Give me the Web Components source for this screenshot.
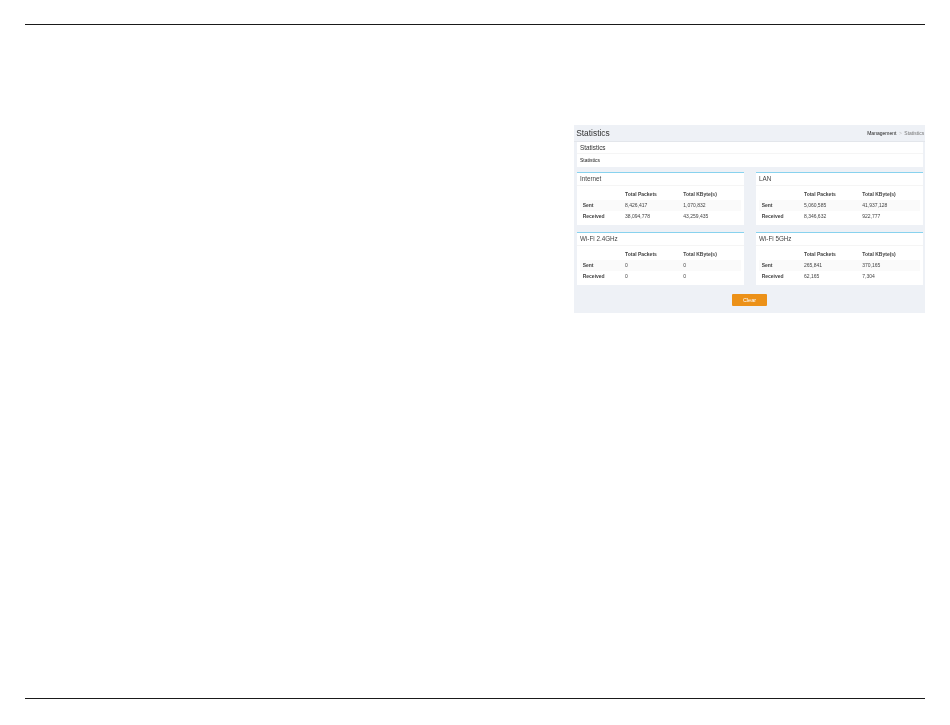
<!DOCTYPE html>
<html>
<head>
<meta charset="utf-8">
<title>Statistics</title>
<style>
  html, body { margin: 0; height: 100%; background: #fff; }
  body { font-family: "Liberation Sans", Arial, sans-serif; }
</style>
</head>
<body>
<manual-page>
  <stats-panel>
    <stats-card slot="cards" name="Internet" sent-packets="8,426,417" sent-kb="1,070,832" recv-packets="38,094,778" recv-kb="43,259,435"></stats-card>
    <stats-card slot="cards" name="LAN" sent-packets="5,060,585" sent-kb="41,937,128" recv-packets="8,346,632" recv-kb="922,777"></stats-card>
    <stats-card slot="cards" name="Wi-Fi 2.4GHz" sent-packets="0" sent-kb="0" recv-packets="0" recv-kb="0"></stats-card>
    <stats-card slot="cards" name="Wi-Fi 5GHz" sent-packets="265,841" sent-kb="370,165" recv-packets="62,165" recv-kb="7,304"></stats-card>
  </stats-panel>
</manual-page>

<script>
(function () {
  /* =========================
    PAGE FRAME
  ========================= */
  class ManualPage extends HTMLElement {
    constructor() {
      super();
      this.attachShadow({ mode: "open" });
      this.shadowRoot.innerHTML = `
        <style>
        :host{
            display:flex;
            flex-direction:column;
            box-sizing:border-box;
            height:725px;
            padding:24px 25px 26px;
        }
        .rule{
            height:1px;
            background:#1a1a1a;
            flex:none;
        }
        .body{
            flex:1;
            display:flex;
            justify-content:flex-end;
            align-items:flex-start;
            padding-top:100px;
        }
        </style>
        <div class="rule"></div>
        <div class="body"><slot></slot></div>
        <div class="rule"></div>
      `;
    }
  }

  /* =========================
    GREY PANEL
  ========================= */
  class StatsPanel extends HTMLElement {
    constructor() {
      super();
      this.attachShadow({ mode: "open" });
      this.shadowRoot.innerHTML = `
        <style>
        :host{
            display:block;
            box-sizing:border-box;
            width:351px;
            height:188px;
            background:#eef1f6;
            color:#333;
            filter:blur(.45px);
        }
        .head{
            display:flex;
            justify-content:space-between;
            align-items:center;
            box-sizing:border-box;
            height:16.7px;
            padding:0 .7px 0 2.2px;
            border-bottom:1px solid #e3e6eb;
        }
        h1{
            margin:0;
            font-size:8.4px;
            font-weight:normal;
        }
        .crumb{
            display:flex;
            gap:2.5px;
            font-size:5px;
            color:#222;
        }
        .crumb i{ font-style:normal; color:#bbb; }
        .crumb span{ color:#777; }
        .intro{
            margin:0 1.7px 0 2.7px;
            background:#fff;
            height:25px;
        }
        .intro h2{
            box-sizing:border-box;
            margin:0;
            height:12.3px;
            line-height:11px;
            padding-left:3.3px;
            font-size:6.4px;
            font-weight:normal;
            border-bottom:1px solid #f5f5f5;
        }
        .intro p{
            margin:0;
            padding-left:3.3px;
            line-height:12.7px;
            font-size:5px;
            color:#222;
        }
        .grid{
            display:grid;
            grid-template-columns:167.6px 167.6px;
            column-gap:11.4px;
            row-gap:6.4px;
            margin:5px 0 0 2.7px;
        }
        .foot{
            display:flex;
            justify-content:center;
            margin-top:8.7px;
        }
        button{
            width:35px;
            height:11.7px;
            padding:0;
            border:0;
            border-radius:1px;
            background:#ec9118;
            color:#fff;
            font:5.5px "Liberation Sans", Arial, sans-serif;
        }
        </style>
        <div class="head">
          <h1>Statistics</h1>
          <div class="crumb">Management <i>&gt;</i> <span>Statistics</span></div>
        </div>
        <div class="intro">
          <h2>Statistics</h2>
          <p>Statistics</p>
        </div>
        <div class="grid"><slot name="cards"></slot></div>
        <div class="foot"><button>Clear</button></div>
      `;
    }
  }

  /* =========================
    ONE COUNTER CARD
  ========================= */
  class StatsCard extends HTMLElement {
    constructor() {
      super();
      this.attachShadow({ mode: "open" });
    }

    connectedCallback() {
      this.render();
    }

    render() {
      const v = (n) => this.getAttribute(n) || "";
      this.shadowRoot.innerHTML = `
        <style>
        :host{
            display:block;
            height:53.6px;
            background:#fff;
        }
        .bar{
            height:1.6px;
            background:#88d2ee;
        }
        .title{
            box-sizing:border-box;
            height:13.2px;
            line-height:11.5px;
            padding-left:3.3px;
            font-size:6.3px;
            color:#444;
            border-bottom:1px solid #f5f5f5;
        }
        .table{
            display:grid;
            grid-template-columns:45px 58.3px 1fr;
            margin:0 3.3px;
            font-size:5px;
            color:#444;
        }
        .table div{
            height:11.7px;
            line-height:11.7px;
        }
        .table .lbl{
            padding-left:2.7px;
            font-weight:bold;
            color:#444;
        }
        .table .th{
            font-weight:bold;
            color:#444;
            height:13.2px;
            line-height:16px;
        }
        .table .alt{ background:#fafafa; }
        </style>
        <div class="bar"></div>
        <div class="title">${v("name")}</div>
        <div class="table">
          <div class="th"></div>
          <div class="th">Total Packets</div>
          <div class="th">Total KByte(s)</div>
          <div class="lbl alt">Sent</div>
          <div class="alt">${v("sent-packets")}</div>
          <div class="alt">${v("sent-kb")}</div>
          <div class="lbl">Received</div>
          <div>${v("recv-packets")}</div>
          <div>${v("recv-kb")}</div>
        </div>
      `;
    }
  }

  customElements.define("manual-page", ManualPage);
  customElements.define("stats-panel", StatsPanel);
  customElements.define("stats-card", StatsCard);
})();
</script>
</body>
</html>
